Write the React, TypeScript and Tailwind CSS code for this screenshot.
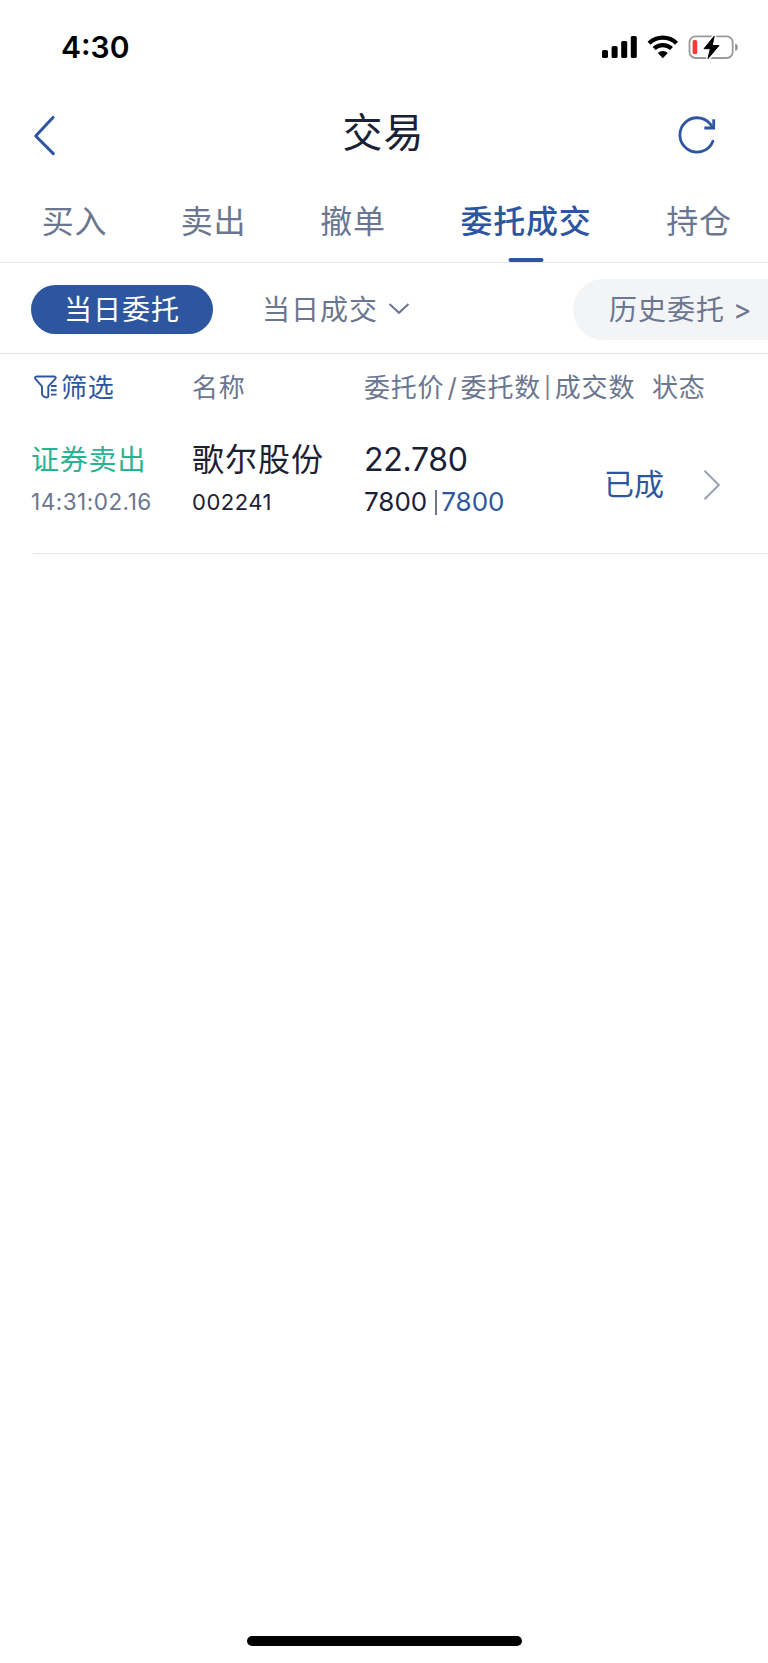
import React, { useState } from 'react'
import clsx from 'clsx'

interface Order {
  id: string
  side: string
  time: string
  name: string
  code: string
  price: string
  amount: number
  filled: number
  status: string
}

const tabs = [
  { label: '买入', className: 'w-[143px] pl-[6px]' },
  { label: '卖出', className: 'w-[141px]' },
  { label: '撤单', className: 'w-[138px]' },
  { label: '委托成交', className: 'w-[208px]' },
  { label: '持仓', className: 'w-[138px]' },
]

const orders: Order[] = [
  {
    id: '1',
    side: '证券卖出',
    time: '14:31:02.16',
    name: '歌尔股份',
    code: '002241',
    price: '22.780',
    amount: 7800,
    filled: 7800,
    status: '已成',
  },
]

function StatusBar() {
  return (
    <div className="flex h-[88px] justify-between pr-[28px] pl-[61px]">
      <span className="mt-[27px] h-10 text-[30px] leading-10 font-semibold text-black">4:30</span>
      <div className="mt-[34px] flex h-[26px]">
        <svg width="36" height="26" viewBox="0 0 36 26">
          <rect x="0" y="16" width="6" height="8" rx="1.6" />
          <rect x="9.6" y="12" width="6" height="12" rx="1.6" />
          <rect x="19.2" y="7" width="6" height="17" rx="1.6" />
          <rect x="28.8" y="2" width="6" height="22" rx="1.6" />
        </svg>
        <svg className="ml-[9px]" width="32" height="26" viewBox="0 0 32 26" fill="none" stroke="#000">
          <path d="M2 9.3a19.6 19.6 0 0 1 27.6 0" strokeWidth="4.2" />
          <path d="M7.1 14.6a12.4 12.4 0 0 1 17.4 0" strokeWidth="4.2" />
          <path d="M15.8 24.2l-5-5.1a7 7 0 0 1 10 0z" fill="#000" stroke="none" />
        </svg>
        <svg className="ml-[9px]" width="52" height="26" viewBox="0 0 52 26">
          <rect x="1.5" y="2.4" width="43.2" height="21.6" rx="6" fill="none" stroke="#999" strokeWidth="1.8" />
          <path d="M47.2 9.4c3.4 1 3.4 6.6 0 7.6z" fill="#8e8e8e" />
          <rect x="4.6" y="6" width="4.6" height="14" rx="1.6" fill="#fb3b30" />
          <path d="M26.2 2.2L16 14.7h6.4L20 24.6 31 11.6h-6.8z" fill="#fff" stroke="#fff" strokeWidth="4" strokeLinejoin="round" />
          <path d="M26.2 2.2L16 14.7h6.4L20 24.6 31 11.6h-6.8z" fill="#000" stroke="#000" strokeWidth="1" strokeLinejoin="round" />
        </svg>
      </div>
    </div>
  )
}

function Header() {
  return (
    <div className="flex h-[92px] justify-between pr-[48px] pl-[32px]">
      <button className="mt-[26px] h-[44px]">
        <svg width="26" height="44" viewBox="0 0 26 44" fill="none" stroke="#2e56a0" strokeWidth="3" strokeLinecap="round" strokeLinejoin="round">
          <path d="M21 3.4L3.7 22l17.6 17.6" />
        </svg>
      </button>
      <h1 className="mt-[15px] ml-[31px] text-[40px] leading-[60px] tracking-[1px] text-[#1b2134]">交易</h1>
      <button className="mt-[26px] h-[44px]">
        <svg width="42" height="44" viewBox="0 0 42 44" fill="none" stroke="#2e56a0" strokeWidth="2.8" strokeLinecap="round" strokeLinejoin="round">
          <path d="M34.9 27.2A17.1 17.1 0 1 1 34.4 13.5" />
          <path d="M35.7 6.6v7.4h-8" strokeLinecap="square" strokeLinejoin="miter" />
        </svg>
      </button>
    </div>
  )
}

function FilterIcon() {
  return (
    <svg width="25" height="26" viewBox="0 0 25 26" fill="none" stroke="#2e56a0" strokeWidth="1.9" strokeLinecap="round" strokeLinejoin="round">
      <path d="M14.3 22V12.400l6.800-7.200c1-1.300.700-2.700-1-2.700H2.700C.9 2.500.6 3.900 1.600 5.200l6.400 7.100v7.500c0 1.800 2.400 3.700 4.500 3.700 1.200 0 1.800-.7 1.800-1.500z" />
      <path d="M17 12h5.600M17 16.300h5.600M17 20.600h5.600" strokeLinecap="butt" />
    </svg>
  )
}

function OrderRow({ order }: { order: Order }) {
  return (
    <div className="ml-[33px] flex h-[135px] border-b border-[#e6e7ea]">
      <div className="-ml-[2px] w-[161px] pt-[21px]">
        <p className="text-[28px] leading-[40px] tracking-[0.8px] text-[#2bb294]">{order.side}</p>
        <p className="mt-[7px] text-[22.5px] leading-[30px] tracking-[0.5px] text-[#6b7690]">{order.time}</p>
      </div>
      <div className="w-[172px] pt-[21px]">
        <p className="text-[32px] leading-[40px] tracking-[1px] text-[#1b2134]">{order.name}</p>
        <p className="mt-[7px] text-[22px] leading-[30px] tracking-[0.5px] text-[#1b2134]">{order.code}</p>
      </div>
      <div className="w-[240px] pt-[21px] text-[#1b2134]">
        <p className="text-[32px] leading-[40px] tracking-[-0.3px]">{order.price}</p>
        <div className="mt-[7px] flex items-center text-[26px] leading-[30px]">
          <span>{order.amount}</span>
          <span className="mr-[4px] ml-[8px] h-[25px] w-[2px] bg-[#6b7690]" />
          <span className="text-[#2e56a0]">{order.filled}</span>
        </div>
      </div>
      <span className="mt-[45px] h-10 w-[98px] text-[30px] leading-10 text-[#2e56a0]">{order.status}</span>
      <svg className="mt-[50px]" width="20" height="32" viewBox="0 0 20 32" fill="none" stroke="#9aa1b0" strokeWidth="2">
        <path d="M2.5 1.8l14.3 14.2L2.5 30.2" />
      </svg>
    </div>
  )
}

export default function App() {
  const [activeTab, setActiveTab] = useState('委托成交')

  return (
    <div className="flex h-[1663px] w-[768px] flex-col overflow-hidden bg-white font-['Inter','Noto_Sans_CJK_SC',sans-serif]">
      <StatusBar />
      <Header />

      {/* Tabs */}
      <div className="flex h-[83px] border-b border-[#e6e7ea]">
        {tabs.map((tab) => (
          <button
            key={tab.label}
            onClick={() => setActiveTab(tab.label)}
            className={clsx(
              'relative shrink-0 pt-[2px] text-center text-[32px] tracking-[0.8px]',
              tab.className,
              activeTab === tab.label ? 'font-medium text-[#2e56a0]' : 'text-[#6b7690]',
            )}
          >
            {tab.label}
            {activeTab === tab.label && <span className="absolute bottom-0 left-1/2 h-[4px] w-[35px] -translate-x-1/2 rounded-full bg-[#2e56a0]" />}
          </button>
        ))}
      </div>

      {/* Sub tabs */}
      <div className="flex h-[91px] items-center border-b border-[#dfe1e8] pt-[2px] pl-[31px] text-[28px] tracking-[1px] text-[#6b7690]">
        <button className="h-[49px] w-[182px] rounded-full bg-[#2e56a0] pt-[2px] leading-[46px] text-white">当日委托</button>
        <button className="ml-[49px] flex items-center pt-[2px] leading-[46px]">
          当日成交
          <svg className="mb-[3px] ml-[10px]" width="22" height="14" viewBox="0 0 22 14" fill="none" stroke="#6b7690" strokeWidth="2">
            <path d="M1.5 2l9.5 8.8L20.5 2" />
          </svg>
        </button>
        <button className="ml-auto -mr-[26px] h-[61px] w-[221px] rounded-full bg-[#f3f4f6] pt-[2px] pl-[36px] text-left leading-[58px] [word-spacing:-1px] whitespace-nowrap">
          历史委托 &gt;
        </button>
      </div>

      {/* Column titles */}
      <div className="flex h-[65px] items-center pl-[34px] text-[26px] tracking-[0.8px] text-[#6b7690]">
        <div className="flex w-[158px] items-center text-[#2e56a0]">
          <FilterIcon />
          <span className="ml-[2px] pt-[1px]">筛选</span>
        </div>
        <span className="w-[172px] pt-[1px]">名称</span>
        <div className="flex w-[288px] items-center pt-[1px] whitespace-nowrap">
          <span>委托价</span>
          <span className="mx-[3px]">/</span>
          <span>委托数</span>
          <span className="mx-[3px] mt-[2px] text-[21px]">|</span>
          <span>成交数</span>
        </div>
        <span className="pt-[1px]">状态</span>
      </div>

      {orders.map((order) => (
        <OrderRow key={order.id} order={order} />
      ))}

      {/* Home indicator */}
      <div className="mx-auto mt-auto mb-[17px] h-[10px] w-[275px] rounded-full bg-black" />
    </div>
  )
}
